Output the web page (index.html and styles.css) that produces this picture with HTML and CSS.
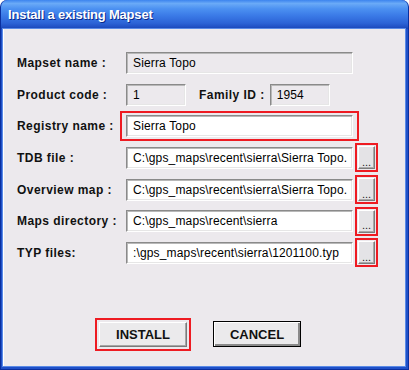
FILE: index.html
```html
<!DOCTYPE html>
<html lang="en">
<head>
    <meta charset="UTF-8">
    <title>Install a existing Mapset</title>
    <link rel="stylesheet" href="styles.css">
</head>
<body>
    <div class="window">
        <div class="titlebar">Install a existing Mapset</div>
        <div class="client">
            <div class="rows">
                <div class="row">
                    <label class="label">Mapset name :</label>
                    <div class="field disabled wide">Sierra Topo</div>
                </div>
                <div class="row">
                    <label class="label">Product code :</label>
                    <div class="field disabled short">1</div>
                    <label class="label-inline">Family ID :</label>
                    <div class="field disabled short">1954</div>
                </div>
                <div class="row">
                    <label class="label">Registry name :</label>
                    <div class="mark mark-field">
                        <div class="field wide">Sierra Topo</div>
                    </div>
                </div>
                <div class="row">
                    <label class="label">TDB file :</label>
                    <div class="field wide">C:\gps_maps\recent\sierra\Sierra Topo.</div>
                    <div class="mark mark-browse"><button class="browse">...</button></div>
                </div>
                <div class="row">
                    <label class="label">Overview map :</label>
                    <div class="field wide">C:\gps_maps\recent\sierra\Sierra Topo.</div>
                    <div class="mark mark-browse"><button class="browse">...</button></div>
                </div>
                <div class="row">
                    <label class="label">Maps directory :</label>
                    <div class="field wide">C:\gps_maps\recent\sierra</div>
                    <div class="mark mark-browse"><button class="browse">...</button></div>
                </div>
                <div class="row">
                    <label class="label">TYP files:</label>
                    <div class="field wide">:\gps_maps\recent\sierra\1201100.typ</div>
                    <div class="mark mark-browse"><button class="browse">...</button></div>
                </div>
            </div>
            <div class="actions">
                <div class="mark mark-button"><button class="btn">INSTALL</button></div>
                <button class="btn btn-default">CANCEL</button>
            </div>
        </div>
    </div>
</body>
</html>
```

FILE: styles.css
```css
body {
    margin: 0;
    background: #fff;
    font-family: "Liberation Sans", Arial, sans-serif;
}
.window {
    width: 409px;
    height: 370px;
    display: flex;
    flex-direction: column;
    box-sizing: border-box;
    background: #1f50c8;
    border-radius: 7px 7px 0 0;
    border: 1px solid #0a2f9e;
    border-top: none;
}
.titlebar {
    height: 29px;
    flex: none;
    box-sizing: border-box;
    padding: 7px 0 0 7px;
    color: #fff;
    font-weight: bold;
    font-size: 13px;
    letter-spacing: -0.2px;
    text-shadow: 1px 1px 0 #0b2a8a;
    border-radius: 7px 7px 0 0;
    background: linear-gradient(to bottom, #3c84ee 0%, #6aaaf7 12%, #4c91f1 30%, #3a79e6 55%, #2c63d6 80%, #2050c4 93%, #1842ad 100%);
}
.client {
    flex: 1;
    margin: 0 3px 3px 2px;
    background: #ece9ed;
    box-shadow: inset 1px 0 0 #fff, 0 0 0 1px #5a8ae6;
    padding: 23px 0 0 14px;
}
.rows {
    display: flex;
    flex-direction: column;
    gap: 9.67px;
}
.row {
    display: flex;
    align-items: center;
    height: 22px;
}
.label {
    width: 109px;
    flex: none;
    font-weight: bold;
    font-size: 12px;
    letter-spacing: 0.45px;
    color: #111;
}
.label-inline {
    margin: 0 5px 0 13px;
    font-weight: bold;
    font-size: 12px;
    letter-spacing: 0.45px;
    color: #111;
}
.field {
    height: 22px;
    box-sizing: border-box;
    padding: 3px 0 0 6px;
    background: #fff;
    font-size: 12px;
    letter-spacing: 0.15px;
    color: #000;
    white-space: nowrap;
    overflow: hidden;
    border: 1px solid;
    border-color: #8a8a8a #fff #fff #8a8a8a;
    box-shadow: inset 1px 1px 0 #b8b8b8, inset -1px -1px 0 #e6e6e6;
}
.field.disabled {
    background: #ece9ed;
}
.wide {
    width: 227px;
}
.short {
    width: 60px;
}
.mark {
    flex: none;
    border: 2px solid #ee1b22;
}
.mark-field {
    padding: 2px 4px;
    margin-left: -6px;
}
.mark-browse {
    padding: 1px;
    margin-left: 2px;
}
.mark-button {
    padding: 2px;
}
.browse {
    display: block;
    width: 17px;
    height: 23px;
    padding: 8px 0 0;
    box-sizing: border-box;
    font-family: "Liberation Sans", Arial, sans-serif;
    font-size: 11px;
    line-height: 10px;
    color: #222;
    background: #e4e3e6;
    border: 1px solid;
    border-color: #fff #7c7c7c #7c7c7c #fff;
    box-shadow: inset -1px -1px 0 #a8a8a8;
}
.actions {
    display: flex;
    align-items: center;
    margin: 54px 0 0 78px;
}
.btn {
    width: 88px;
    height: 25px;
    padding: 0;
    box-sizing: border-box;
    font-family: "Liberation Sans", Arial, sans-serif;
    font-weight: bold;
    font-size: 13px;
    color: #111;
    background: #ebeaec;
    border: 1px solid;
    border-color: #fff #7a7a7a #7a7a7a #fff;
    box-shadow: inset -1px -1px 0 #a6a6a6;
}
.btn-default {
    height: 26px;
    margin-left: 22px;
    border: 1px solid #000;
    box-shadow: inset 1px 1px 0 #fff, inset -2px -2px 0 #8a8a8a;
}
```
